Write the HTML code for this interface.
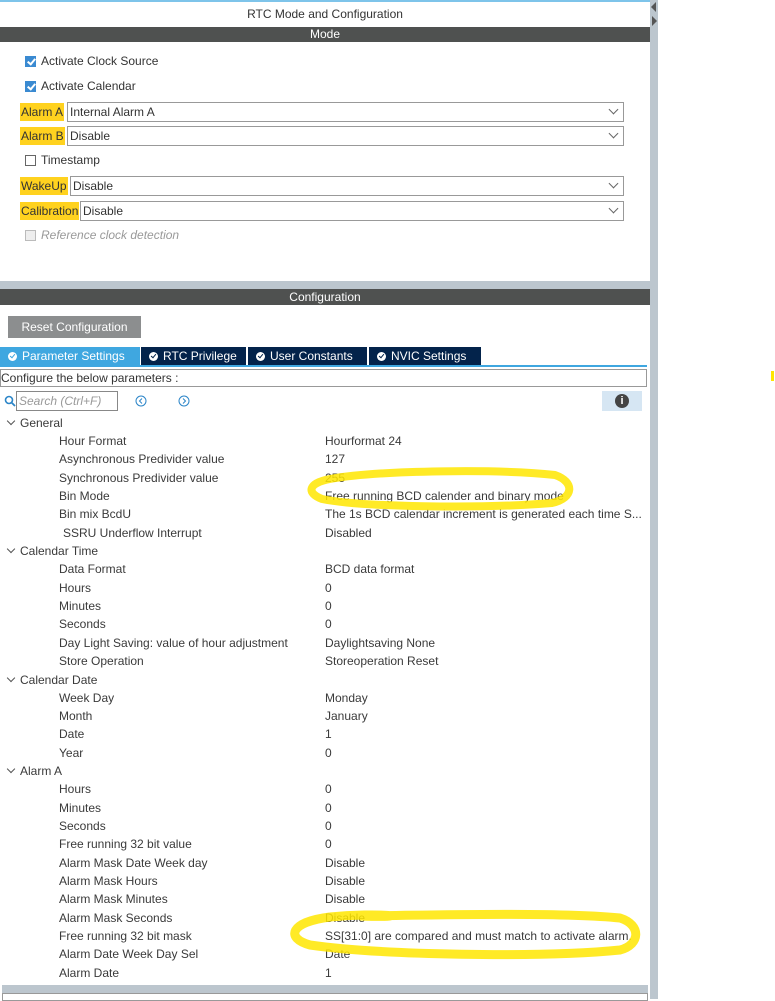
<!DOCTYPE html>
<html><head><meta charset="utf-8"><style>
*{margin:0;padding:0;box-sizing:border-box}
body{width:775px;height:999px;background:#fff;font-family:"Liberation Sans",Arial,sans-serif;font-size:12px;color:#333;position:relative;overflow:hidden}
.a{position:absolute}
.bar{background:#4f5150;color:#fff;text-align:center;font-size:12px}
.cb{position:absolute;width:11px;height:11px;border:1px solid #666;background:#fff}
.cb.on{background:#3a8ad1;border-color:#3a8ad1}
.cb.on:after{content:"";position:absolute;left:3px;top:0;width:3px;height:6px;border:solid #fff;border-width:0 2px 2px 0;transform:rotate(40deg)}
.hl{position:absolute;background:#ffd21f;color:#333;font-size:12px;padding:0 1px;height:18px;line-height:18px}
.sel{position:absolute;border:1px solid #999;height:20px;background:#fff;font-size:12px;line-height:18px;padding-left:2px}
.sel:after{content:"";position:absolute;right:6px;top:3px;width:6px;height:6px;border:solid #666;border-width:0 1px 1px 0;transform:rotate(45deg)}
.row{position:absolute;height:18px;line-height:18px;font-size:12px;color:#3a3a3a;white-space:nowrap}
.tab{position:absolute;top:347px;height:18px;background:#03234b;color:#fff;font-size:12px;line-height:18px;padding-left:8px;white-space:nowrap}
.tab i{display:inline-block;width:9px;height:9px;border-radius:50%;background:#fff;margin-right:5px;vertical-align:-1px;position:relative}
.tab i:after{content:"";position:absolute;left:3px;top:1px;width:2px;height:4px;border:solid #03234b;border-width:0 1.5px 1.5px 0;transform:rotate(40deg)}
.tab.act i:after{border-color:#3fa7e0}
.chev{position:absolute;left:8px;width:6px;height:6px;border:solid #555;border-width:0 1px 1px 0;transform:rotate(45deg)}
</style></head><body>
<div class="a" style="left:0;top:0;width:650px;height:2px;background:#7ec4ea"></div>
<div class="a" style="left:650px;top:0;width:8px;height:999px;background:#bcc6ce"></div>
<div class="a" style="left:651px;top:2px;width:0;height:0;border-top:5px solid transparent;border-bottom:5px solid transparent;border-right:5px solid #555"></div>
<div class="a" style="left:652px;top:16px;width:0;height:0;border-top:5px solid transparent;border-bottom:5px solid transparent;border-left:5px solid #555"></div>
<div class="a" style="left:0;top:5px;width:650px;text-align:center;font-size:12px;line-height:18px">RTC Mode and Configuration</div>
<div class="a bar" style="left:0;top:27px;width:650px;height:15px;line-height:15px">Mode</div>

<div class="cb on" style="left:25px;top:56px"></div><div class="a" style="left:41px;top:54px">Activate Clock Source</div>
<div class="cb on" style="left:25px;top:81px"></div><div class="a" style="left:41px;top:79px">Activate Calendar</div>
<div class="hl" style="left:20px;top:103px">Alarm A</div><div class="sel" style="left:67px;top:102px;width:557px">Internal Alarm A</div>
<div class="hl" style="left:20px;top:127px">Alarm B</div><div class="sel" style="left:67px;top:126px;width:557px">Disable</div>
<div class="cb" style="left:25px;top:155px"></div><div class="a" style="left:41px;top:153px">Timestamp</div>
<div class="hl" style="left:20px;top:177px">WakeUp</div><div class="sel" style="left:70px;top:176px;width:554px">Disable</div>
<div class="hl" style="left:20px;top:202px">Calibration</div><div class="sel" style="left:80px;top:201px;width:544px">Disable</div>
<div class="cb" style="left:25px;top:230px;border-color:#bbb;background:#eee"></div><div class="a" style="left:41px;top:228px;color:#999;font-style:italic">Reference clock detection</div>

<div class="a" style="left:0;top:281px;width:650px;height:8px;background:#bcc6ce"></div>
<div class="a bar" style="left:0;top:289px;width:650px;height:16px;line-height:16px">Configuration</div>
<div class="a" style="left:8px;top:316px;width:133px;height:22px;background:#8c8e8f;color:#fff;line-height:22px;text-align:center">Reset Configuration</div>
<div class="tab act" style="left:0;width:140px;background:#3fa7e0"><i></i>Parameter Settings</div>
<div class="tab" style="left:141px;width:105px"><i></i>RTC Privilege</div>
<div class="tab" style="left:248px;width:119px"><i></i>User Constants</div>
<div class="tab" style="left:369px;width:112px"><i></i>NVIC Settings</div>
<div class="a" style="left:0;top:365px;width:647px;height:2px;background:#3fa7e0"></div>
<div class="a" style="left:0;top:369px;width:647px;height:18px;border:1px solid #999;line-height:16px">Configure the below parameters :</div>
<svg class="a" style="left:4px;top:395px" width="12" height="12"><circle cx="5" cy="5" r="3.5" fill="none" stroke="#2b85c8" stroke-width="1.6"/><line x1="7.5" y1="7.5" x2="11" y2="11" stroke="#2b85c8" stroke-width="1.8"/></svg>
<div class="a" style="left:16px;top:391px;width:102px;height:20px;border:1px solid #888;color:#999;font-style:italic;line-height:18px;padding-left:2px">Search (Ctrl+F)</div>
<svg class="a" style="left:135px;top:395px" width="12" height="12"><circle cx="6" cy="6" r="5" fill="none" stroke="#2b85c8"/><path d="M7 3.5 L4.5 6 L7 8.5" fill="none" stroke="#2b85c8"/></svg>
<svg class="a" style="left:178px;top:395px" width="12" height="12"><circle cx="6" cy="6" r="5" fill="none" stroke="#2b85c8"/><path d="M5 3.5 L7.5 6 L5 8.5" fill="none" stroke="#2b85c8"/></svg>
<div class="a" style="left:602px;top:391px;width:40px;height:20px;background:#d6e6f3"></div>
<div class="a" style="left:615px;top:394px;width:14px;height:14px;border-radius:50%;background:#444;color:#fff;font-weight:bold;font-size:11px;line-height:14px;text-align:center">i</div>

<div class="chev" style="top:418px"></div><div class="row" style="left:20px;top:414px">General</div>
<div class="row" style="left:59px;top:432px">Hour Format</div><div class="row" style="left:325px;top:432px">Hourformat 24</div>
<div class="row" style="left:59px;top:450px">Asynchronous Predivider value</div><div class="row" style="left:325px;top:450px">127</div>
<div class="row" style="left:59px;top:469px">Synchronous Predivider value</div><div class="row" style="left:325px;top:469px">255</div>
<div class="row" style="left:59px;top:487px">Bin Mode</div><div class="row" style="left:325px;top:487px">Free running BCD calender and binary mode</div>
<div class="row" style="left:59px;top:505px">Bin mix BcdU</div><div class="row" style="left:325px;top:505px">The 1s BCD calendar increment is generated each time S...</div>
<div class="row" style="left:63px;top:524px">SSRU Underflow Interrupt</div><div class="row" style="left:325px;top:524px">Disabled</div>
<div class="chev" style="top:546px"></div><div class="row" style="left:20px;top:542px">Calendar Time</div>
<div class="row" style="left:59px;top:560px">Data Format</div><div class="row" style="left:325px;top:560px">BCD data format</div>
<div class="row" style="left:59px;top:579px">Hours</div><div class="row" style="left:325px;top:579px">0</div>
<div class="row" style="left:59px;top:597px">Minutes</div><div class="row" style="left:325px;top:597px">0</div>
<div class="row" style="left:59px;top:615px">Seconds</div><div class="row" style="left:325px;top:615px">0</div>
<div class="row" style="left:59px;top:634px">Day Light Saving: value of hour adjustment</div><div class="row" style="left:325px;top:634px">Daylightsaving None</div>
<div class="row" style="left:59px;top:652px">Store Operation</div><div class="row" style="left:325px;top:652px">Storeoperation Reset</div>
<div class="chev" style="top:675px"></div><div class="row" style="left:20px;top:671px">Calendar Date</div>
<div class="row" style="left:59px;top:689px">Week Day</div><div class="row" style="left:325px;top:689px">Monday</div>
<div class="row" style="left:59px;top:707px">Month</div><div class="row" style="left:325px;top:707px">January</div>
<div class="row" style="left:59px;top:725px">Date</div><div class="row" style="left:325px;top:725px">1</div>
<div class="row" style="left:59px;top:744px">Year</div><div class="row" style="left:325px;top:744px">0</div>
<div class="chev" style="top:766px"></div><div class="row" style="left:20px;top:762px">Alarm A</div>
<div class="row" style="left:59px;top:780px">Hours</div><div class="row" style="left:325px;top:780px">0</div>
<div class="row" style="left:59px;top:799px">Minutes</div><div class="row" style="left:325px;top:799px">0</div>
<div class="row" style="left:59px;top:817px">Seconds</div><div class="row" style="left:325px;top:817px">0</div>
<div class="row" style="left:59px;top:835px">Free running 32 bit value</div><div class="row" style="left:325px;top:835px">0</div>
<div class="row" style="left:59px;top:854px">Alarm Mask Date Week day</div><div class="row" style="left:325px;top:854px">Disable</div>
<div class="row" style="left:59px;top:872px">Alarm Mask Hours</div><div class="row" style="left:325px;top:872px">Disable</div>
<div class="row" style="left:59px;top:890px">Alarm Mask Minutes</div><div class="row" style="left:325px;top:890px">Disable</div>
<div class="row" style="left:59px;top:909px">Alarm Mask Seconds</div><div class="row" style="left:325px;top:909px">Disable</div>
<div class="row" style="left:59px;top:927px">Free running 32 bit mask</div><div class="row" style="left:325px;top:927px">SS[31:0] are compared and must match to activate alarm.</div>
<div class="row" style="left:59px;top:945px">Alarm Date Week Day Sel</div><div class="row" style="left:325px;top:945px">Date</div>
<div class="row" style="left:59px;top:964px">Alarm Date</div><div class="row" style="left:325px;top:964px">1</div>

<svg class="a" style="left:0;top:0" width="775" height="999">
<path d="M330 479 C380 470 500 469 555 475 C575 482 574 498 552 503 C480 509 360 507 322 499 C306 493 308 483 330 479" fill="none" stroke="#ffe600" stroke-width="8" opacity="0.85"/>
<path d="M330 917 C380 912 420 918 360 916 C430 915 560 912 620 918 C642 925 640 945 620 950 C540 958 380 955 310 945 C285 938 290 922 330 917" fill="none" stroke="#ffe600" stroke-width="9" opacity="0.85"/>
<rect x="771" y="371" width="3" height="10" fill="#ffe600"/>
</svg>

<div class="a" style="left:2px;top:985px;width:646px;height:8px;background:#bcc6ce"></div>
<div class="a" style="left:2px;top:993px;width:646px;height:8px;border:1px solid #999;background:#fff"></div>
</body></html>
